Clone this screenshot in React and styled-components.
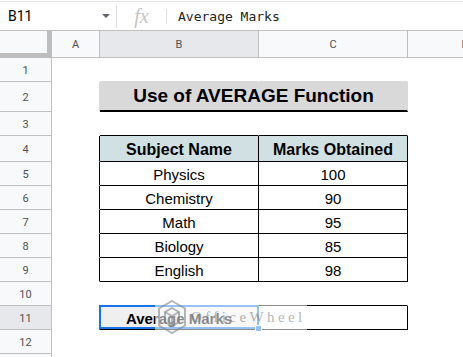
import React from "react";
import styled, { createGlobalStyle, css } from "styled-components";

const BLACK = "#000";
const TITLE = "#d9d9d9";
const HEAD = "#d0e0e3";
const GRID = "#c0c0c0";

const GlobalStyle = createGlobalStyle`
  *, *::before, *::after { box-sizing: border-box; }
  html, body { margin: 0; padding: 0; background: #fff; overflow: hidden; }
  body { font-family: Roboto, "Liberation Sans", Arial, sans-serif; }
`;

/* ------------------------------ formula bar ------------------------------ */
const Page = styled.div`
  position: relative;
  width: 463px;
  height: 357px;
  overflow: hidden;
  background: #fff;
`;

const FormulaBar = styled.div`
  margin-top: 1px;
  height: 30px;
  border-top: 1px solid #e1e3e6;
  border-bottom: 1px solid ${GRID};
  display: flex;
  align-items: center;
`;

const NameBox = styled.div`
  width: 116px;
  display: flex;
  align-items: center;
  justify-content: space-between;
  padding: 0 6px 0 8px;
  font: 14px Roboto, "Liberation Sans", sans-serif;
  color: #000;
`;

const Caret = styled.span`
  width: 0;
  height: 0;
  border-left: 4px solid transparent;
  border-right: 4px solid transparent;
  border-top: 4px solid #5f6368;
`;

const Divider = styled.span`
  width: 1px;
  height: ${(p) => p.$h}px;
  background: #e0e0e0;
`;

const Fx = styled.div`
  width: 49px;
  text-align: center;
  font: italic 20px "Liberation Serif", serif;
  color: #c4c4c4;
  line-height: 1;
`;

const FormulaText = styled.div`
  padding-left: 11px;
  font: 13px "DejaVu Sans Mono", monospace;
  color: #222;
`;

/* --------------------------------- grid ---------------------------------- */
const Sheet = styled.div`
  display: grid;
  grid-template-columns: 52px 48px 159px 149px 115px;
  grid-template-rows: 27px 24px 30px 24px 26px repeat(9, 24px);
`;

const Corner = styled.div`
  background: #f8f9fa;
  border-right: 5px solid #bdbdbd;
  border-bottom: 5px solid #bdbdbd;
`;

const ColHead = styled.div`
  display: flex;
  align-items: center;
  justify-content: center;
  background: ${(p) => (p.$selected ? "#e6e8eb" : "#f8f9fa")};
  border-right: 1px solid ${GRID};
  border-bottom: 1px solid ${GRID};
  font: 11px Roboto, sans-serif;
  color: #4d5156;
`;

const RowHead = styled(ColHead)`
  padding-top: 1px;
`;

const Cell = styled.div`
  position: relative;
  grid-column: span ${(p) => p.$span || 1};
  display: flex;
  align-items: ${(p) => (p.$title ? "center" : "flex-end")};
  justify-content: center;
  padding-bottom: ${(p) => (p.$title ? 0 : 2)}px;
  background: ${(p) => p.$fill || "#fff"};
  border-right: 1px solid ${(p) => p.$r || "transparent"};
  border-bottom: ${(p) => p.$bw || 1}px solid ${(p) => p.$b || "transparent"};
  font-family: "Liberation Sans", Arial, sans-serif;
  font-size: ${(p) => p.$size || 15}px;
  font-weight: ${(p) => (p.$bold ? 700 : 400)};
  color: #000;
  white-space: nowrap;

  ${(p) =>
    p.$active &&
    css`
      &::after {
        content: "";
        position: absolute;
        top: -1px;
        left: -1px;
        right: -1px;
        bottom: 0;
        border: 2px solid #1a73e8;
      }
    `}
`;

const Handle = styled.span`
  position: absolute;
  right: -4px;
  bottom: -3px;
  width: 7px;
  height: 7px;
  background: #1a73e8;
  border: 1px solid #fff;
  z-index: 2;
`;

/* ------------------------------- watermark ------------------------------- */
const Watermark = styled.div`
  position: absolute;
  left: 155px;
  top: 297px;
  width: 152px;
  height: 40px;
  display: flex;
  align-items: center;
  gap: 4px;
  padding-left: 2px;
  background: rgba(255, 255, 255, 0.55);
  z-index: 3;
  pointer-events: none;
`;

const WatermarkText = styled.span`
  font: 15px "Liberation Serif", serif;
  letter-spacing: 3.4px;
  color: rgba(110, 115, 120, 0.55);
`;

const box = { r: BLACK, b: BLACK };
const head = { ...box, fill: HEAD, bold: true, size: 16 };

const subjects = [
  ["Physics", 100],
  ["Chemistry", 90],
  ["Math", 95],
  ["Biology", 85],
  ["English", 98],
];

const rows = [
  { n: 1, cells: [{}, { b: TITLE }, { b: TITLE }, {}] },
  {
    n: 2,
    cells: [
      { r: TITLE },
      { text: "Use of AVERAGE Function", span: 2, fill: TITLE, r: TITLE, b: BLACK, bw: 2, bold: true, size: 19, title: true },
      {},
    ],
  },
  { n: 3, cells: [{}, { b: BLACK }, { b: BLACK }, {}] },
  { n: 4, cells: [{ r: BLACK }, { text: "Subject Name", ...head }, { text: "Marks Obtained", ...head }, {}] },
  ...subjects.map(([name, mark], i) => ({
    n: 5 + i,
    cells: [{ r: BLACK }, { text: name, ...box }, { text: String(mark), ...box }, {}],
  })),
  { n: 10, cells: [{}, { b: BLACK }, { b: BLACK }, {}] },
  {
    n: 11,
    selected: true,
    cells: [{ r: BLACK }, { text: "Average Marks", ...box, fill: "#efefef", bold: true, active: true }, { ...box }, {}],
  },
  { n: 12, cells: [{}, {}, {}, {}] },
  { n: 13, cells: [{}, {}, {}, {}] },
];

const HexLogo = () => (
  <svg width="30" height="36" viewBox="0 0 30 36" fill="none" stroke="rgba(120,126,132,0.55)" strokeWidth="2">
    <path d="M15 2 L28 9.5 L28 26.5 L15 34 L2 26.5 L2 9.5 Z" />
    <path d="M15 9 L22 13 L22 23 L15 27 L8 23 L8 13 Z" />
    <path d="M8 13 L15 17 L22 13 M15 17 L15 27" />
  </svg>
);

const App = () => {
  return (
    <Page>
      <GlobalStyle />
      <FormulaBar>
        <NameBox>
          B11
          <Caret />
        </NameBox>
        <Divider $h={23} />
        <Fx>fx</Fx>
        <Divider $h={15} />
        <FormulaText>Average Marks</FormulaText>
      </FormulaBar>

      <Sheet>
        <Corner />
        <ColHead>A</ColHead>
        <ColHead $selected>B</ColHead>
        <ColHead>C</ColHead>
        <ColHead>D</ColHead>

        {rows.map((row) => (
          <React.Fragment key={row.n}>
            <RowHead $selected={row.selected}>{row.n}</RowHead>
            {row.cells.map((c, i) => (
              <Cell
                key={i}
                $span={c.span}
                $fill={c.fill}
                $r={c.r}
                $b={c.b}
                $bw={c.bw}
                $bold={c.bold}
                $size={c.size}
                $title={c.title}
                $active={c.active}
              >
                {c.text}
                {c.active && <Handle />}
              </Cell>
            ))}
          </React.Fragment>
        ))}
      </Sheet>

      <Watermark>
        <HexLogo />
        <WatermarkText>OfficeWheel</WatermarkText>
      </Watermark>
    </Page>
  );
};

export default App;
